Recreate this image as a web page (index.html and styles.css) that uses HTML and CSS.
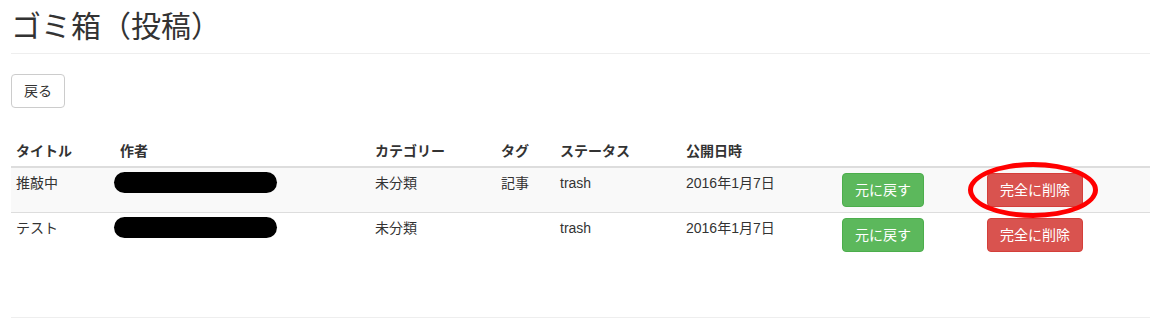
FILE: index.html
```html
<!DOCTYPE html>
<html lang="ja">
<head>
    <meta charset="UTF-8">
    <meta name="viewport" content="width=device-width, initial-scale=1.0">
    <title>ゴミ箱（投稿）</title>
    <link rel="stylesheet" href="styles.css">
</head>
<body>
    <div class="container">
        <div class="page_header">
            <h2>ゴミ箱（投稿）</h2>
        </div>

        <a href="javascript:;" class="btn btn_default">戻る</a>

        <table class="trash_table">
            <colgroup>
                <col class="col_title">
                <col class="col_author">
                <col class="col_category">
                <col class="col_tag">
                <col class="col_status">
                <col class="col_date">
                <col class="col_restore">
                <col class="col_delete">
            </colgroup>
            <thead>
                <tr>
                    <th>タイトル</th>
                    <th>作者</th>
                    <th>カテゴリー</th>
                    <th>タグ</th>
                    <th>ステータス</th>
                    <th>公開日時</th>
                    <th></th>
                    <th></th>
                </tr>
            </thead>
            <tbody>
                <tr>
                    <td>推敲中</td>
                    <td><span class="redacted"></span></td>
                    <td>未分類</td>
                    <td>記事</td>
                    <td>trash</td>
                    <td>2016年1月7日</td>
                    <td><a href="javascript:;" class="btn btn_success">元に戻す</a></td>
                    <td class="marked">
                        <a href="javascript:;" class="btn btn_danger">完全に削除</a>
                        <span class="circle"></span>
                    </td>
                </tr>
                <tr>
                    <td>テスト</td>
                    <td><span class="redacted"></span></td>
                    <td>未分類</td>
                    <td></td>
                    <td>trash</td>
                    <td>2016年1月7日</td>
                    <td><a href="javascript:;" class="btn btn_success">元に戻す</a></td>
                    <td><a href="javascript:;" class="btn btn_danger">完全に削除</a></td>
                </tr>
            </tbody>
        </table>

        <hr class="footer_line">
    </div>
</body>
</html>
```

FILE: styles.css
```css
*{
    margin: 0;
    padding: 0;
    box-sizing: border-box;
}

body{
    font-family: "Liberation Sans", "Noto Sans CJK JP", sans-serif;
    font-size: 14px;
    line-height: 20px;
    color: #333;
    background-color: #fff;
}

.container{
    width: 1139px;
    margin-left: 11px;
}

.page_header{
    padding-top: 10px;
    padding-bottom: 10px;
    border-bottom: 1px solid #eee;
}

.page_header h2{
    font-size: 30px;
    font-weight: normal;
    line-height: 33px;
    color: #333;
}

.btn{
    display: inline-block;
    padding: 6px 12px;
    font-size: 14px;
    line-height: 20px;
    text-align: center;
    white-space: nowrap;
    text-decoration: none;
    border: 1px solid transparent;
    border-radius: 4px;
    cursor: pointer;
}

.btn_default{
    margin-top: 20px;
    color: #333;
    background-color: #fff;
    border-color: #ccc;
}

.btn_success{
    color: #fff;
    background-color: #5cb85c;
    border-color: #4cae4c;
}

.btn_danger{
    color: #fff;
    background-color: #d9534f;
    border-color: #d43f3a;
}

.trash_table{
    width: 100%;
    margin-top: 28px;
    table-layout: fixed;
    border-collapse: collapse;
    border-spacing: 0;
}

.col_title{ width: 104px; }
.col_author{ width: 255px; }
.col_category{ width: 126px; }
.col_tag{ width: 59px; }
.col_status{ width: 126px; }
.col_date{ width: 156px; }
.col_restore{ width: 145px; }
.col_delete{ width: 168px; }

.trash_table th,
.trash_table td{
    padding: 5px;
    text-align: left;
    vertical-align: top;
    line-height: 20px;
}

.trash_table thead th{
    font-weight: bold;
    vertical-align: bottom;
    border-bottom: 2px solid #ddd;
}

.trash_table tbody td{
    border-top: 1px solid #ddd;
}

.trash_table thead + tbody tr:first-child td{
    border-top: 0;
}

.trash_table tbody tr:nth-child(odd){
    background-color: #f9f9f9;
}

.redacted{
    display: block;
    width: 163px;
    height: 21px;
    margin-top: -1px;
    margin-left: -6px;
    background-color: #000;
    border-radius: 11px;
}

.marked{
    position: relative;
}

.circle{
    position: absolute;
    left: -14px;
    top: -6px;
    width: 130px;
    height: 56px;
    border: 5px solid #f00;
    border-radius: 50%;
    pointer-events: none;
}

.footer_line{
    margin-top: 60px;
    border: 0;
    border-top: 1px solid #eee;
}
```
